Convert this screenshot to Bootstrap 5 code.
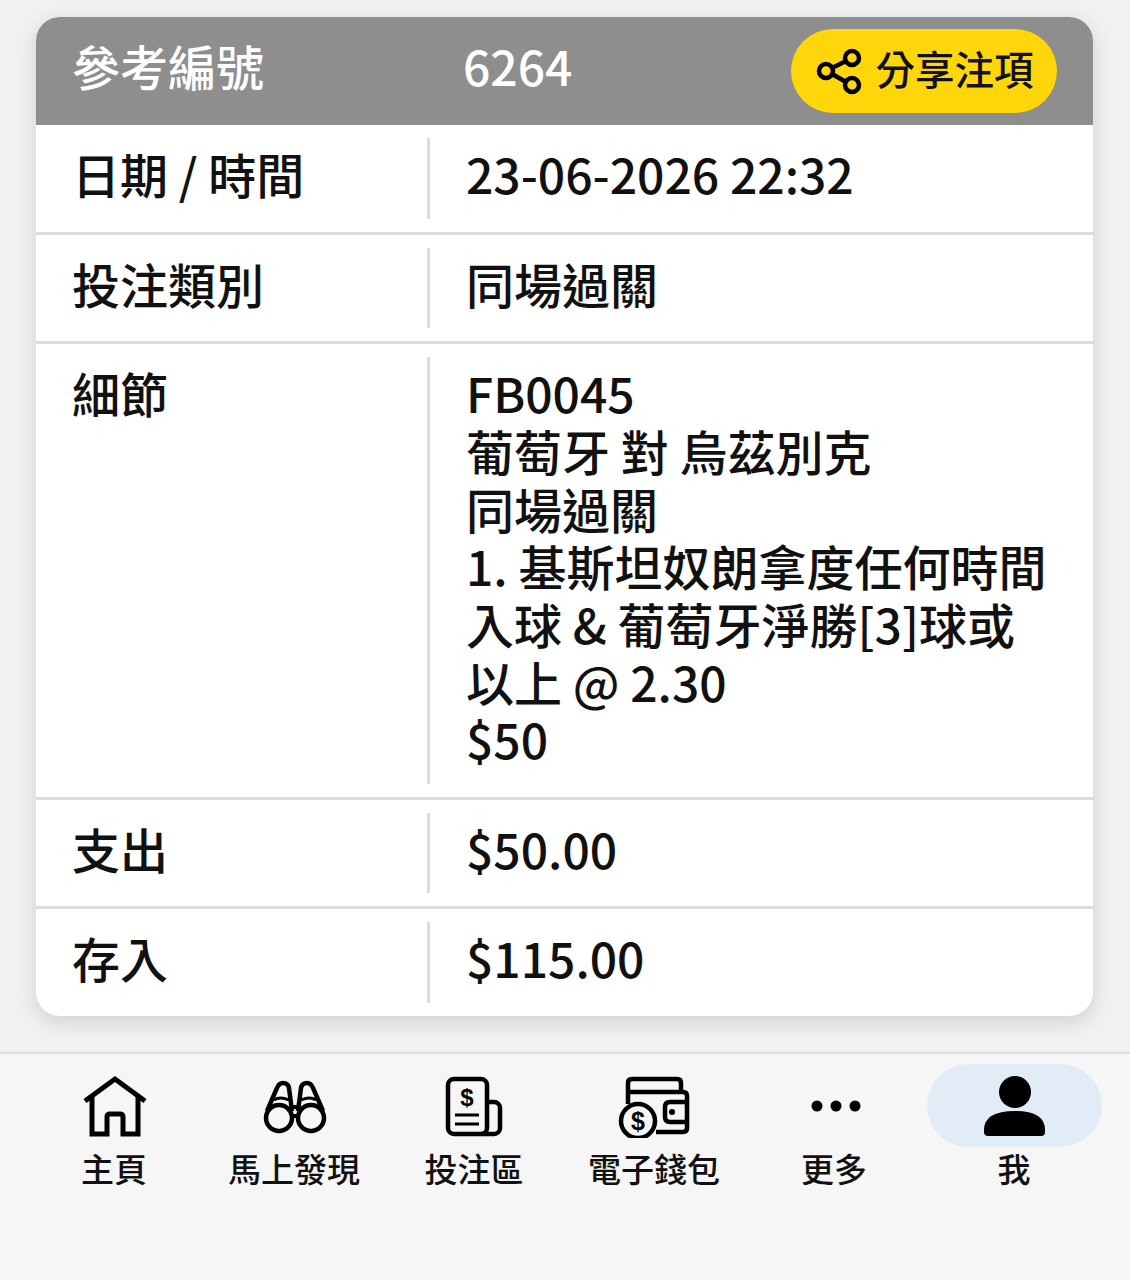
<!DOCTYPE html>
<html lang="zh-Hant">
<head>
    <meta charset="UTF-8">
    <meta name="viewport" content="width=device-width, initial-scale=1.0">
    <title>注項詳情</title>
    <link href="https://cdn.jsdelivr.net/npm/bootstrap@5.3.0/dist/css/bootstrap.min.css" rel="stylesheet">
    <style>
        body {
            background-color: #f1f1f1;
            font-family: "Noto Sans CJK TC", "Noto Sans", sans-serif;
            font-weight: 500;
            color: #111;
            height: 1280px;
            overflow: hidden;
        }
        .bet-wrap {
            padding: 17px 37px 36px 36px;
        }
        .bet-card {
            border: 0;
            border-radius: 24px;
            overflow: hidden;
            background: #fff;
            box-shadow: 0 6px 20px rgba(0, 0, 0, .14);
        }
        .bet-head {
            height: 108px;
            background: #8e8e8e;
            color: #fff;
            font-size: 48px;
            padding: 0 36px 0 36px;
        }
        .bet-head-label { width: 391px; padding-bottom: 12px; }
        .bet-head-value { padding-bottom: 12px; }
        .share-btn {
            height: 84px;
            width: 266px;
            border-radius: 42px;
            background: #ffd60a;
            color: #111;
            font-size: 39.5px;
            font-weight: 500;
            border: 0;
            padding: 0;
            gap: 13px;
        }
        .share-btn span { padding-bottom: 7px; }
        .bet-row {
            padding: 13px 0;
            border-bottom: 3px solid #dcdcdc;
            font-size: 48px;
            line-height: 57.67px;
        }
        .bet-row:last-child { border-bottom: 0; }
        .bet-label {
            width: 391px;
            padding: 7px 0 15.93px 36px;
            flex-shrink: 0;
        }
        .bet-value {
            border-left: 3px solid #dcdcdc;
            padding: 7px 40px 15.93px 36px;
            flex-grow: 1;
        }
        .tab-bar {
            background: #f6f6f6;
            border-top: 2px solid #dedede;
            height: 228px;
            padding: 10px 26px 0 24px;
        }
        .tab-item {
            width: 180px;
            font-size: 33px;
            line-height: 44px;
            color: #111;
        }
        .tab-label { margin-top: -1px; }
        .tab-icon {
            width: 175px;
            height: 83px;
            border-radius: 42px;
        }
        .tab-active { background: #e1ecf6; }
    </style>
</head>
<body>
    <div class="bet-wrap">
        <div class="card bet-card">
            <div class="bet-head d-flex align-items-center">
                <div class="bet-head-label">參考編號</div>
                <div class="bet-head-value flex-grow-1">6264</div>
                <button class="share-btn btn d-flex align-items-center justify-content-center">
                    <svg width="48" height="48" viewBox="0 0 48 48" fill="none" stroke="#000" stroke-width="4.5">
                        <circle cx="37" cy="11" r="7"/>
                        <circle cx="11" cy="24" r="7"/>
                        <circle cx="37" cy="38" r="7"/>
                        <path d="M17 21 31 14M17 27 31 35"/>
                    </svg>
                    <span>分享注項</span>
                </button>
            </div>
            <div class="bet-row d-flex">
                <div class="bet-label">日期 / 時間</div>
                <div class="bet-value">23-06-2026 22:32</div>
            </div>
            <div class="bet-row d-flex">
                <div class="bet-label">投注類別</div>
                <div class="bet-value">同場過關</div>
            </div>
            <div class="bet-row d-flex">
                <div class="bet-label">細節</div>
                <div class="bet-value">FB0045<br>葡萄牙 對 烏茲別克<br>同場過關<br>1. 基斯坦奴朗拿度任何時間入球 &amp; 葡萄牙淨勝[3]球或以上 @ 2.30<br>$50</div>
            </div>
            <div class="bet-row d-flex">
                <div class="bet-label">支出</div>
                <div class="bet-value">$50.00</div>
            </div>
            <div class="bet-row d-flex">
                <div class="bet-label">存入</div>
                <div class="bet-value">$115.00</div>
            </div>
        </div>
    </div>

    <div class="tab-bar d-flex">
        <div class="tab-item d-flex flex-column align-items-center">
            <div class="tab-icon d-flex align-items-center justify-content-center">
                <svg width="80" height="64" viewBox="0 0 80 64" fill="none" stroke="#000" stroke-width="5">
                    <path d="M11 27 41 5 71 27"/>
                    <path d="M18 23V60H33V43Q33 40 36 40H46Q49 40 49 43V60H64V23"/>
                </svg>
            </div>
            <div class="tab-label">主頁</div>
        </div>
        <div class="tab-item d-flex flex-column align-items-center">
            <div class="tab-icon d-flex align-items-center justify-content-center">
                <svg width="80" height="64" viewBox="0 0 80 64" fill="none" stroke="#000" stroke-width="4.5">
                    <circle cx="25" cy="44" r="13"/>
                    <circle cx="57" cy="44" r="13"/>
                    <path d="M13 37 23 14Q25 9 29 9 34 9 35 14L38 37"/>
                    <path d="M69 37 59 14Q57 9 53 9 48 9 47 14L44 37"/>
                    <path d="M38 33H44M38 42H44" stroke-width="4"/>
                    <path d="M20 26Q26 22 35 26M62 26Q56 22 47 26" stroke-width="3"/>
                </svg>
            </div>
            <div class="tab-label">馬上發現</div>
        </div>
        <div class="tab-item d-flex flex-column align-items-center">
            <div class="tab-icon d-flex align-items-center justify-content-center">
                <svg width="80" height="64" viewBox="0 0 80 64" fill="none" stroke="#000" stroke-width="4.5">
                    <rect x="14" y="5" width="39" height="55" rx="6"/>
                    <path d="M53 28H60A6 6 0 0 1 66 34V54A6 6 0 0 1 60 60H47"/>
                    <path d="M21 41H45M21 50H45" stroke-width="3"/>
                    <text x="33" y="32" font-family="Liberation Sans, sans-serif" font-size="24" font-weight="700" text-anchor="middle" fill="#000" stroke="none">$</text>
                </svg>
            </div>
            <div class="tab-label">投注區</div>
        </div>
        <div class="tab-item d-flex flex-column align-items-center">
            <div class="tab-icon d-flex align-items-center justify-content-center">
                <svg width="80" height="64" viewBox="0 0 80 64" fill="none" stroke="#000" stroke-width="4.5">
                    <path d="M14 30V9Q14 5 18 5H63Q67 5 67 9V18"/>
                    <path d="M14 18H69Q73 18 73 22V54Q73 58 69 58H42"/>
                    <path d="M73 28H56Q51 28 51 33V43Q51 48 56 48H73"/>
                    <circle cx="58" cy="38" r="3" fill="#000" stroke="none"/>
                    <circle cx="24" cy="47" r="17" fill="#f6f6f6"/>
                    <text x="24" y="56" font-family="Liberation Sans, sans-serif" font-size="25" font-weight="700" text-anchor="middle" fill="#000" stroke="none">$</text>
                </svg>
            </div>
            <div class="tab-label">電子錢包</div>
        </div>
        <div class="tab-item d-flex flex-column align-items-center">
            <div class="tab-icon d-flex align-items-center justify-content-center">
                <svg width="80" height="64" viewBox="0 0 80 64" fill="#000">
                    <circle cx="23" cy="32" r="5.5"/>
                    <circle cx="42" cy="32" r="5.5"/>
                    <circle cx="61" cy="32" r="5.5"/>
                </svg>
            </div>
            <div class="tab-label">更多</div>
        </div>
        <div class="tab-item d-flex flex-column align-items-center">
            <div class="tab-icon tab-active d-flex align-items-center justify-content-center">
                <svg width="80" height="64" viewBox="0 0 80 64" fill="#000">
                    <circle cx="41" cy="18" r="16"/>
                    <path d="M10 56Q10 37 41 37 71 37 71 56V58Q71 62 67 62H14Q10 62 10 58Z"/>
                </svg>
            </div>
            <div class="tab-label">我</div>
        </div>
    </div>
    <script src="https://cdn.jsdelivr.net/npm/bootstrap@5.3.0/dist/js/bootstrap.bundle.min.js"></script>
</body>
</html>
